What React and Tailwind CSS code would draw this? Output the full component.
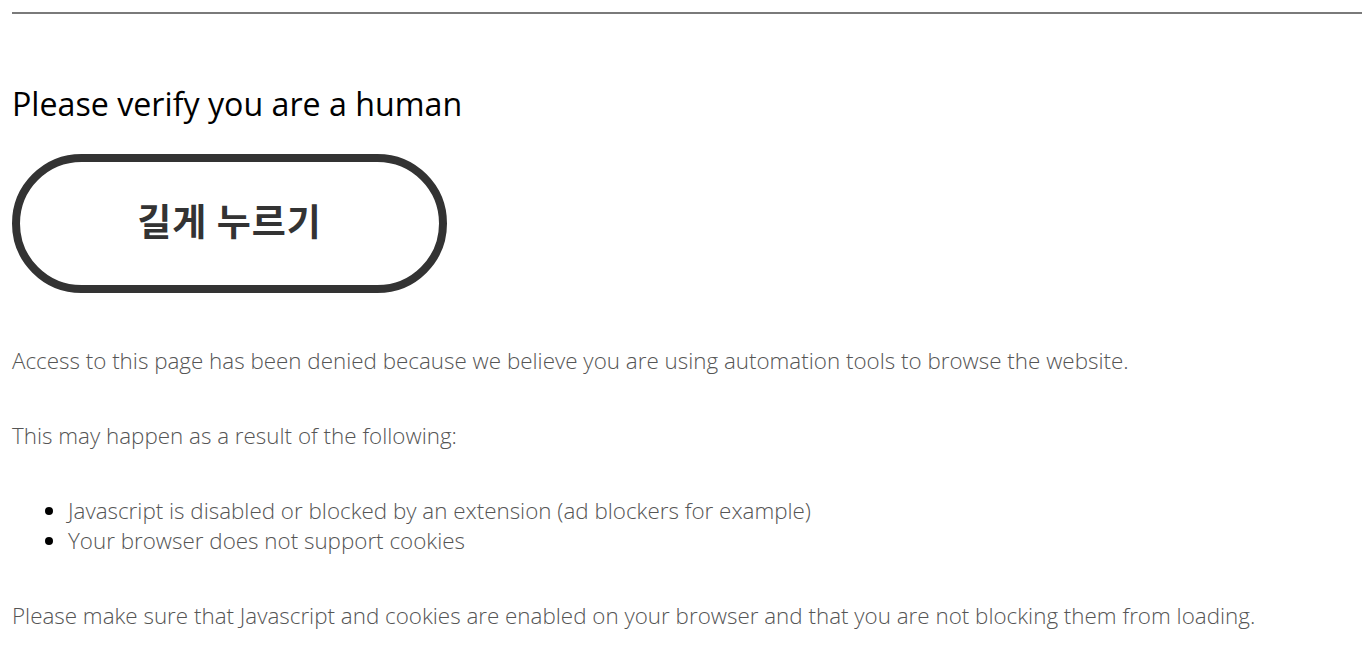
export default function App() {
  return (
    <div className="min-h-screen bg-white px-3 pt-3" style={{ fontFamily: '"Open Sans", "Noto Sans CJK KR", sans-serif' }}>
      <hr className="border-0 border-t-2 border-[#7a7a7a] mr-[-8px]" />
      <h1 className="mt-[70px] text-[32.2px] leading-[40px] text-black">Please verify you are a human</h1>
      <div className="mt-[30px] w-[435px] h-[139px] rounded-full border-[8px] border-[#333] flex items-center justify-center">
        <span className="text-[37px] leading-none font-semibold text-[#333] pb-[6px] tracking-[1px]" style={{ fontFamily: '"Noto Sans CJK KR", sans-serif' }}>길게 누르기</span>
      </div>
      <div className="text-[22.4px] leading-[30px] font-light text-[#555]">
        <p className="mt-[53px]">Access to this page has been denied because we believe you are using automation tools to browse the website.</p>
        <p className="mt-[45px]">This may happen as a result of the following:</p>
        <ul className="mt-[45px] pl-[56px] list-disc marker:text-black">
          <li>Javascript is disabled or blocked by an extension (ad blockers for example)</li>
          <li>Your browser does not support cookies</li>
        </ul>
        <p className="mt-[45px]">Please make sure that Javascript and cookies are enabled on your browser and that you are not blocking them from loading.</p>
      </div>
    </div>
  );
}
